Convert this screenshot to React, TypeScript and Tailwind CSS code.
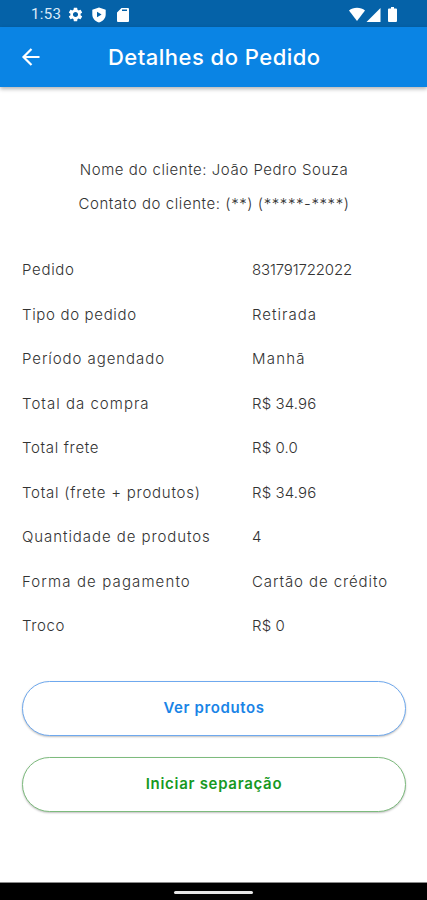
import React from 'react';
import { MdSettings } from 'react-icons/md';
import { clsx } from 'clsx';

const customer = [
  { text: 'Nome do cliente: João Pedro Souza', tracking: 'tracking-[0.54px]' },
  { text: 'Contato do cliente: (**) (*****-****)', tracking: 'tracking-[0.57px]' },
];

const details = [
  { label: 'Pedido', value: '831791722022', labelTracking: 'tracking-[0.7px]', valueTracking: 'tracking-[-0.15px]' },
  { label: 'Tipo do pedido', value: 'Retirada', labelTracking: 'tracking-[0.66px]', valueTracking: 'tracking-[1.02px]' },
  { label: 'Período agendado', value: 'Manhã', labelTracking: 'tracking-[0.93px]', valueTracking: 'tracking-[1.2px]' },
  { label: 'Total da compra', value: 'R$ 34.96', labelTracking: 'tracking-[1.02px]', valueTracking: 'tracking-[0.12px]' },
  { label: 'Total frete', value: 'R$ 0.0', labelTracking: 'tracking-[0.66px]', valueTracking: 'tracking-[0.12px]' },
  { label: 'Total (frete + produtos)', value: 'R$ 34.96', labelTracking: 'tracking-[0.76px]', valueTracking: 'tracking-[0.12px]' },
  { label: 'Quantidade de produtos', value: '4', labelTracking: 'tracking-[0.93px]', valueTracking: 'tracking-normal' },
  { label: 'Forma de pagamento', value: 'Cartão de crédito', labelTracking: 'tracking-[1.12px]', valueTracking: 'tracking-[0.9px]' },
  { label: 'Troco', value: 'R$ 0', labelTracking: 'tracking-[0.6px]', valueTracking: 'tracking-[0.12px]' },
];

const StatusBar = () => (
  <div className="flex h-[27px] items-center justify-between bg-[#0562a8] pl-[31px] pr-[29px] pt-[2px] text-white">
    <div className="flex items-center">
      <span className="w-[36px] font-['Roboto'] text-[15px] leading-none tracking-[0.3px] text-[#dcebf8]">1:53</span>
      <MdSettings size={17} />
      <svg className="ml-[8px]" width="14" height="16" viewBox="0 0 14 16">
        <path fill="currentColor" fillRule="evenodd" d="M7 .5 13.7 2.8v4.7c0 3.7-2.7 6.8-6.7 8-4-1.2-6.7-4.3-6.7-8V2.8zM5 4.8v5.4L9.6 7.5z" />
      </svg>
      <svg className="ml-[11px]" width="12" height="14" viewBox="0 0 12 14">
        <path fill="currentColor" fillRule="evenodd" d="M4.5 0H11a1 1 0 0 1 1 1v12a1 1 0 0 1-1 1H1a1 1 0 0 1-1-1V4.5zM5 1.5v1.5h5V1.5z" />
      </svg>
    </div>
    <svg width="49" height="16" viewBox="0 0 49 16" fill="currentColor">
      <path d="M0 3.5C4-.2 12-.2 16 3.5L8 14z" />
      <path d="M31.5 1v14H17.5z" />
      <path d="M42 0h3v1.5h2a1 1 0 0 1 1 1V14a1 1 0 0 1-1 1h-7a1 1 0 0 1-1-1V2.5a1 1 0 0 1 1-1h2z" />
    </svg>
  </div>
);

const Button = ({ children, className }: { children: React.ReactNode; className: string }) => (
  <button className={clsx('flex h-[55px] w-full items-center justify-center rounded-full border bg-white text-[15px] font-semibold shadow-[0_1px_2px_rgba(0,0,0,0.25)]', className)}>
    {children}
  </button>
);

export default function App() {
  return (
    <div className="flex h-[900px] w-[427px] flex-col overflow-hidden bg-white font-['Inter',sans-serif] text-[#333333]">
      <StatusBar />

      <header className="flex h-[60px] shrink-0 items-center bg-[#0a84e4] pl-[19px] text-white shadow-[0_2px_4px_rgba(0,0,0,0.3)]">
        <svg width="24" height="24" viewBox="0 0 24 24" fill="none" stroke="currentColor" strokeWidth="2.2">
          <path d="M20.5 12H4.5M12.5 4 4.5 12l8 8" />
        </svg>
        <h1 className="ml-[65px] whitespace-nowrap text-[22px] font-medium tracking-[0.48px]">Detalhes do Pedido</h1>
      </header>

      <main className="flex flex-1 flex-col pl-[22px] pr-[21px] pt-[66px]">
        <section className="flex flex-col items-center text-[15px] font-light leading-[33.5px]">
          {customer.map((line) => (
            <p key={line.text} className={clsx('whitespace-nowrap', line.tracking)}>{line.text}</p>
          ))}
        </section>

        <dl className="mt-[28px] text-[15px] font-light leading-[44.5px]">
          {details.map((row) => (
            <div key={row.label} className="flex h-[44.5px]">
              <dt className={clsx('w-[230px] whitespace-nowrap', row.labelTracking)}>{row.label}</dt>
              <dd className={clsx('whitespace-nowrap', row.valueTracking)}>{row.value}</dd>
            </div>
          ))}
        </dl>

        <div className="mt-[32px] flex flex-col gap-[21px]">
          <Button className="border-[#6fa9ee] tracking-[0.6px] text-[#1a84e6]">Ver produtos</Button>
          <Button className="border-[#7dbb7d] tracking-[0.7px] text-[#17991f]">Iniciar separação</Button>
        </div>
      </main>

      <footer className="flex h-[18px] items-center justify-center border-t border-[#8a8a8a] bg-black pt-[2px]">
        <div className="h-[3px] w-[79px] rounded-full bg-[#e5e5e5]" />
      </footer>
    </div>
  );
}
